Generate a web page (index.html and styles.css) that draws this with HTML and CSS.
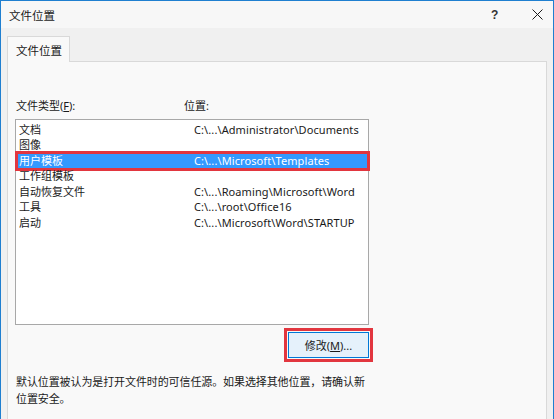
FILE: index.html
```html
<!DOCTYPE html>
<html lang="zh-CN">
<head>
<meta charset="utf-8">
<title>文件位置</title>
<link rel="stylesheet" href="styles.css">
</head>
<body>
<div class="window">
  <div class="titlebar">
    <span class="title">文件位置</span>
    <span class="help">?</span>
    <span class="close">
      <svg width="11" height="11" viewBox="0 0 11 11"><path d="M0.5 0.5 L10.5 10.5 M10.5 0.5 L0.5 10.5" stroke="#1a1a1a" stroke-width="1" fill="none"/></svg>
    </span>
  </div>
  <div class="tabstrip">
    <div class="tab">文件位置</div>
  </div>
  <div class="panel">
    <div class="labels">
      <span class="label-type">文件类型(<u>F</u>):</span>
      <span class="label-loc">位置:</span>
    </div>
    <div class="listbox">
      <div class="row"><span>文档</span><span class="path">C:\...\Administrator\Documents</span></div>
      <div class="row"><span>图像</span><span class="path"></span></div>
      <div class="row selected"><span>用户模板</span><span class="path">C:\...\Microsoft\Templates</span></div>
      <div class="row"><span>工作组模板</span><span class="path"></span></div>
      <div class="row"><span>自动恢复文件</span><span class="path">C:\...\Roaming\Microsoft\Word</span></div>
      <div class="row"><span>工具</span><span class="path">C:\...\root\Office16</span></div>
      <div class="row"><span>启动</span><span class="path">C:\...\Microsoft\Word\STARTUP</span></div>
    </div>
    <div class="btnrow">
      <button class="btn">修改(<u>M</u>)...</button>
    </div>
    <p class="note">默认位置被认为是打开文件时的可信任源。如果选择其他位置，请确认新位置安全。</p>
  </div>
</div>
</body>
</html>
```
FILE: styles.css
```css
* { box-sizing: border-box; }
html, body {
  margin: 0;
  padding: 0;
  width: 554px;
  height: 419px;
  overflow: hidden;
  background: #f0f0f0;
}
body {
  font-family: "Noto Sans", "Noto Sans CJK SC", sans-serif;
  font-size: 11px;
  color: #1a1a1a;
}
.window {
  width: 554px;
  height: 419px;
  border: 1px solid #1f7fd0;
  border-bottom: none;
  background: #f0f0f0;
  display: flex;
  flex-direction: column;
}
.titlebar {
  height: 27px;
  background: #f7f7f7;
  display: flex;
  align-items: center;
  padding-left: 8px;
  font-size: 11.5px;
}
.title { flex: 1; font-family: "Noto Sans CJK SC", sans-serif; }
.help {
  width: 14px;
  margin-right: 27px;
  font-size: 12px;
  font-weight: bold;
  color: #333;
  font-family: "Liberation Sans", sans-serif;
}
.close {
  width: 11px;
  height: 11px;
  margin-right: 10px;
  display: flex;
}
.tabstrip {
  margin-top: 8px;
  padding-left: 6px;
  display: flex;
}
.tab {
  width: 63px;
  height: 26px;
  border: 1px solid #d9d9d9;
  border-bottom: none;
  background: #f9f9f9;
  display: flex;
  align-items: center;
  padding-left: 8px;
  font-family: "Noto Sans CJK SC", sans-serif;
  font-size: 11.5px;
  margin-bottom: -1px;
  position: relative;
  z-index: 1;
}
.panel {
  margin-left: 6px;
  width: 540px;
  flex: 1;
  border: 1px solid #d9d9d9;
  border-bottom: none;
  background: #f9f9f9;
  padding: 37px 0 0 7px;
}
.labels {
  display: grid;
  grid-template-columns: 168px 1fr;
  padding-left: 1px;
  line-height: 14px;
  height: 14px;
  margin-bottom: 6px;
}
.labels u, .btn u { text-underline-offset: 1px; }
.listbox {
  width: 354px;
  height: 206px;
  border: 1px solid #a8a8a8;
  background: #ffffff;
  padding-top: 1.5px;
}
.row {
  display: grid;
  grid-template-columns: 175px 1fr;
  padding-left: 3px;
  height: 15.6px;
  line-height: 15.6px;
  white-space: nowrap;
  position: relative;
}
.path { letter-spacing: 0.1px; }
.row.selected {
  background: #3399ff;
  color: #ffffff;
}
.row.selected::after {
  content: "";
  position: absolute;
  left: -1px;
  right: -2px;
  top: -2px;
  bottom: -2.5px;
  border: 3px solid #e2363f;
}
.btnrow {
  width: 354px;
  display: flex;
  justify-content: flex-end;
  margin-top: 7px;
}
.btn {
  width: 81px;
  height: 26px;
  margin-right: 0;
  border: 1px solid #0078d7;
  background: #e5f1fb;
  font-family: inherit;
  font-size: 11px;
  color: #1a1a1a;
  padding: 0;
  outline: 3px solid #e2363f;
  outline-offset: 1.5px;
}
.note {
  margin: 15px 0 0 1px;
  width: 353px;
  line-height: 17px;
  letter-spacing: -0.1px;
}
```
